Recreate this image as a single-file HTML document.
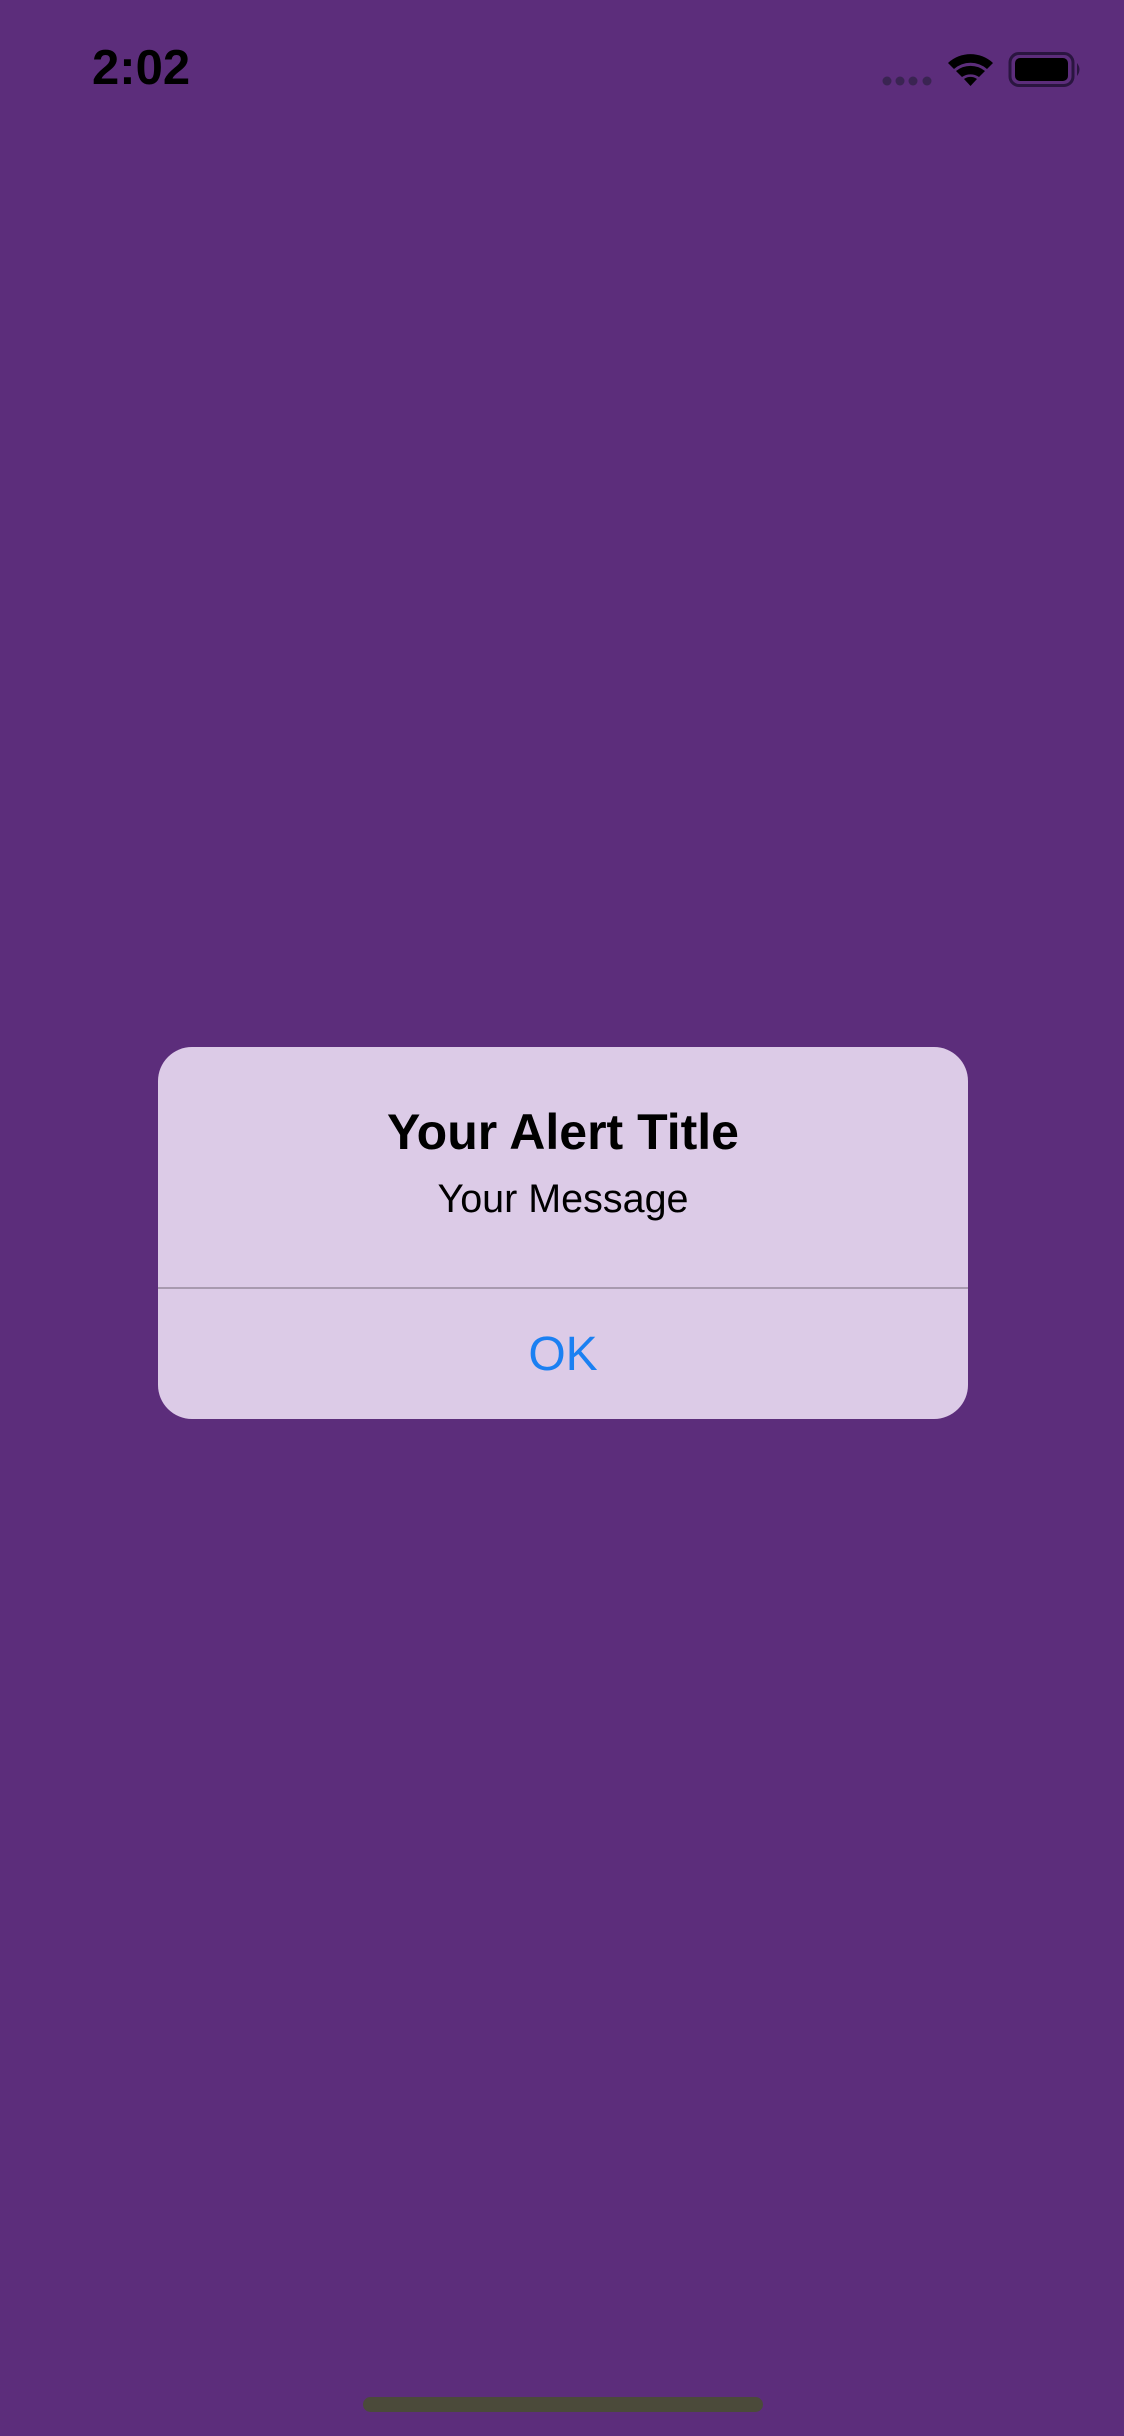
<!DOCTYPE html>
<html><head><meta charset="utf-8"><style>
html,body{margin:0;padding:0}
body{width:1124px;height:2436px;background:#5c2d7b;position:relative;overflow:hidden;font-family:"Liberation Sans",sans-serif}
.abs{position:absolute}
</style></head><body>
<div class="abs" style="left:92px;top:40px;font-size:49px;font-weight:bold;color:#000">2:02</div>
<svg class="abs" style="left:870px;top:40px" width="220" height="60" viewBox="870 40 220 60">
<g fill="#3a2452"><circle cx="887" cy="81" r="4.5"/><circle cx="900" cy="81" r="4.5"/><circle cx="913" cy="81" r="4.5"/><circle cx="927" cy="81" r="4.5"/></g>
<path d="M948 63 A33 33 0 0 1 993 63 L987 69 A25 25 0 0 0 954 69 Z" fill="#000"/>
<path d="M956 71 A23 23 0 0 1 985 71 L979 77 A15 15 0 0 0 962 77 Z" fill="#000"/>
<path d="M964 79 A11 11 0 0 1 977 79 L970.5 86 Z" fill="#000"/>
<rect x="1010" y="53.5" width="63" height="32" rx="9" fill="none" stroke="#2a1540" stroke-width="3"/>
<rect x="1015" y="58" width="53" height="23" rx="5" fill="#000"/>
<path d="M1077 63 Q1082 69.5 1077 76 Z" fill="#2a1540"/>
</svg>
<div class="abs" style="left:158px;top:1047px;width:810px;height:372px;background:#dccbe7;border-radius:34px;overflow:hidden">
<div class="abs" style="left:0;top:56px;width:810px;text-align:center;font-size:50px;font-weight:bold;color:#000">Your Alert Title</div>
<div class="abs" style="left:0;top:130px;width:810px;text-align:center;font-size:39.5px;color:#000">Your Message</div>
<div class="abs" style="left:0;top:240px;width:810px;height:2px;background:#a89aaf"></div>
<div class="abs" style="left:0;top:280px;width:810px;text-align:center;font-size:48px;color:#1b80f2">OK</div>
</div>
<div class="abs" style="left:363px;top:2397px;width:400px;height:15px;border-radius:8px;background:#4b4a3a"></div>
</body></html>
